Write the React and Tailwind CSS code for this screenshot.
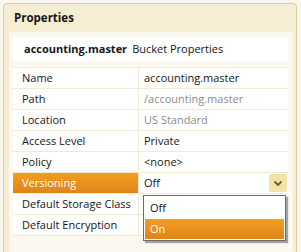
import React from 'react';

const rows = [
  { label: 'Name', value: 'accounting.master' },
  { label: 'Path', value: '/accounting.master', muted: true },
  { label: 'Location', value: 'US Standard', muted: true },
  { label: 'Access Level', value: 'Private' },
  { label: 'Policy', value: '<none>' },
  { label: 'Versioning', value: 'Off', active: true },
  { label: 'Default Storage Class', value: '' },
  { label: 'Default Encryption', value: '' },
];

function Chevron() {
  return (
    <svg width="10" height="7" viewBox="0 0 10 7">
      <path d="M1.5 1.5 L5 5 L8.5 1.5" fill="none" stroke="#6a5a2c" strokeWidth="1.8" />
    </svg>
  );
}

export default function App() {
  return (
    <div className="w-[301px] h-[252px] overflow-hidden bg-[#f9f6eb] pt-[3px] pl-[3px] pr-[4px] font-['Open_Sans',sans-serif] text-[11px] text-[#161616]">
      <div className="h-[270px] rounded-t-[4px] border border-[#d8cea4] bg-[#f5eed2]">
        {/* Title */}
        <div className="h-[28px] pl-[10px] flex items-center font-bold text-[11.5px]">Properties</div>

        <div className="ml-[5px] mr-[3px] h-[240px] bg-[#faf8ef] pl-[4px] pr-[5px] pt-[5px]">
          {/* Heading box */}
          <div className="h-[25px] bg-white flex items-center pl-[11px] gap-[5px]">
            <span className="font-bold">accounting.master</span>
            <span>Bucket Properties</span>
          </div>

          {/* Property grid */}
          <div className="mt-[5px] border-t border-[#f2ead1] bg-white">
            {rows.map((r) => (
              <div key={r.label} className="flex h-[21px] border-b border-[#f2ead1]">
                <div
                  className={`w-[126px] flex items-center pl-[9px] border-r border-[#f2ead1] ${
                    r.active ? 'bg-gradient-to-b from-[#f39d20] to-[#e0841a] text-white' : ''
                  }`}
                >
                  {r.label}
                </div>
                <div className={`relative flex-1 flex items-center pl-[5px] ${r.muted ? 'text-[#8c8c8c]' : ''}`}>
                  {r.value}
                  {r.active && (
                    <>
                      <div className="absolute right-[1px] top-[1px] w-[18px] h-[18px] rounded-[2px] bg-[#f1e3aa] flex items-center justify-center">
                        <Chevron />
                      </div>
                      <div className="absolute left-[4px] top-[22px] w-[143px] border border-[#6a6a6a] bg-white p-[1px] shadow-[2px_2px_1px_rgba(0,0,0,0.35)] z-10">
                        <div className="h-[22px] flex items-center pl-[5px]">Off</div>
                        <div className="h-[20px] flex items-center pl-[5px] bg-gradient-to-b from-[#f39d20] to-[#e0841a] text-white">On</div>
                      </div>
                    </>
                  )}
                </div>
              </div>
            ))}
          </div>
        </div>
      </div>
    </div>
  );
}
